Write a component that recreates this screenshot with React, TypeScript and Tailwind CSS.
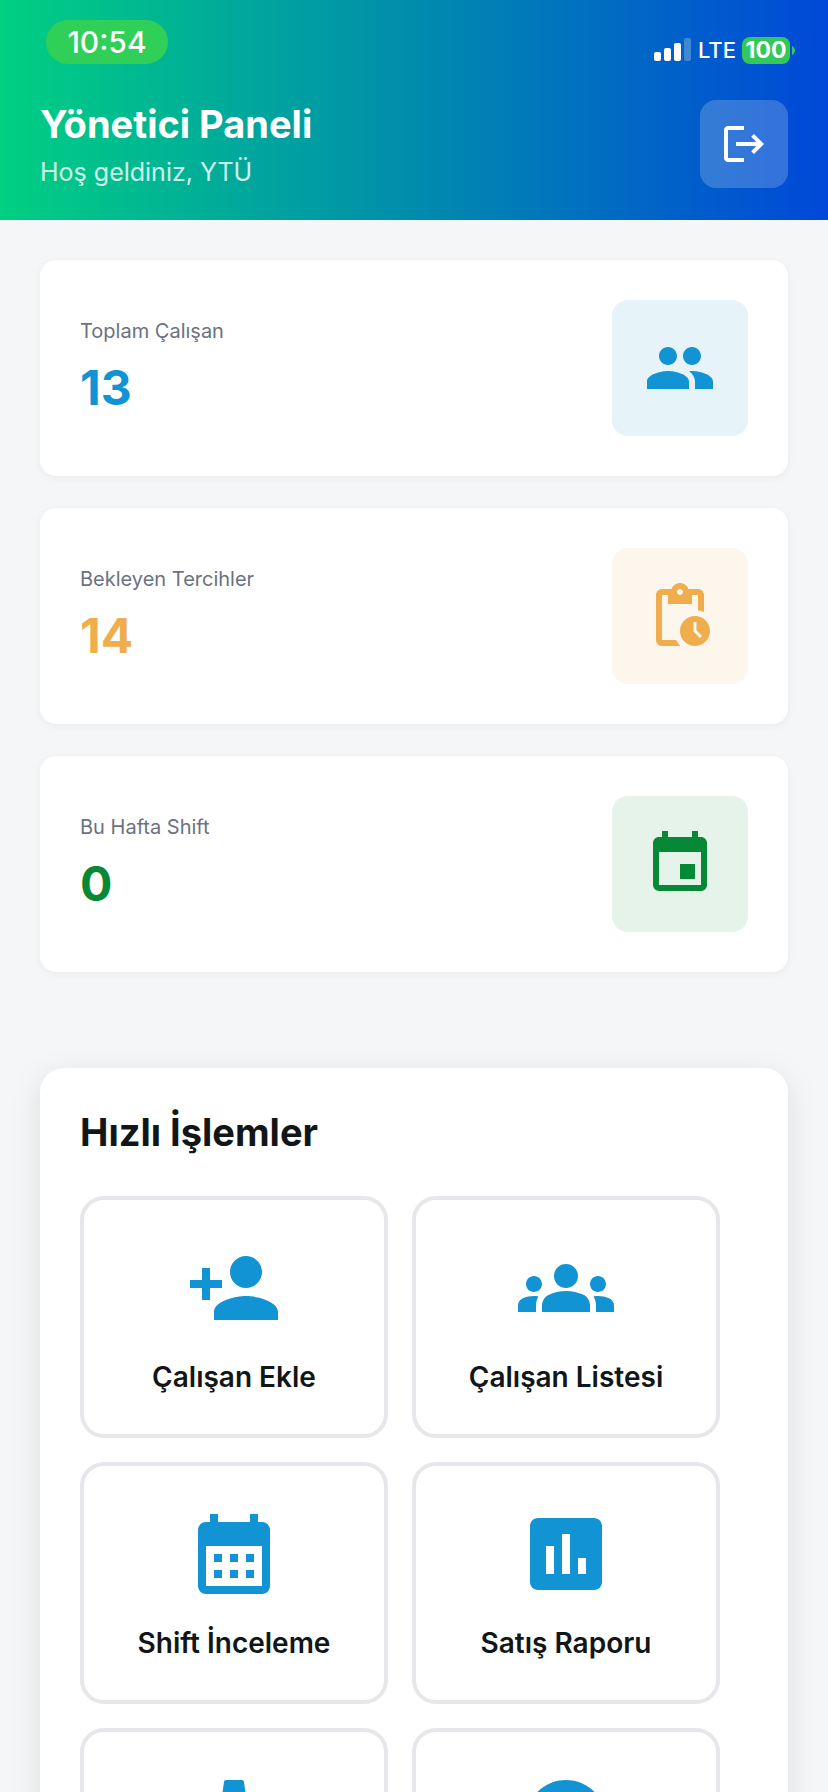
import type { ComponentType, SVGProps } from "react";
import {
  MdAccountCircle,
  MdAssessment,
  MdCalendarMonth,
  MdEvent,
  MdGroups,
  MdLogout,
  MdPendingActions,
  MdPeople,
  MdPersonAdd,
} from "react-icons/md";

type Icon = ComponentType<SVGProps<SVGSVGElement>>;

type Stat = { label: string; value: number; Icon: Icon; text: string; box: string };

function GearIcon(props: SVGProps<SVGSVGElement>) {
  return (
    <svg viewBox="0 0 24 24" fill="currentColor" {...props}>
      <path d="M19.43 12.98c.04-.32.07-.64.07-.98s-.03-.66-.07-.98l2.11-1.65c.19-.15.24-.42.12-.64l-2-3.46c-.12-.22-.39-.3-.61-.22l-2.49 1c-.52-.4-1.08-.73-1.69-.98l-.38-2.65C14.46 2.18 14.25 2 14 2h-4c-.25 0-.46.18-.49.42l-.38 2.65c-.61.25-1.17.59-1.69.98l-2.49-1c-.23-.09-.49 0-.61.22l-2 3.46c-.13.22-.07.49.12.64l2.11 1.65c-.04.32-.07.65-.07.98s.03.66.07.98l-2.11 1.65c-.19.15-.24.42-.12.64l2 3.46c.12.22.39.3.61.22l2.49-1c.52.4 1.08.73 1.69.98l.38 2.65c.03.24.24.42.49.42h4c.25 0 .46-.18.49-.42l.38-2.65c.61-.25 1.17-.59 1.69-.98l2.49 1c.23.09.49 0 .61-.22l2-3.46c.12-.22.07-.49-.12-.64l-2.11-1.65zM12 15.5c-1.93 0-3.5-1.57-3.5-3.5s1.57-3.5 3.5-3.5 3.5 1.57 3.5 3.5-1.57 3.5-3.5 3.5z" />
    </svg>
  );
}

const stats: Stat[] = [
  { label: "Toplam Çalışan", value: 13, Icon: MdPeople, text: "text-[#1193d4]", box: "bg-[#e6f3f9]" },
  { label: "Bekleyen Tercihler", value: 14, Icon: MdPendingActions, text: "text-[#f0ad4e]", box: "bg-[#fdf6ec]" },
  { label: "Bu Hafta Shift", value: 0, Icon: MdEvent, text: "text-[#078836]", box: "bg-[#e5f3ea]" },
];

const actions: { name: string; iconOnly?: boolean; Icon: Icon }[] = [
  { name: "Çalışan Ekle", Icon: MdPersonAdd },
  { name: "Çalışan Listesi", Icon: MdGroups },
  { name: "Shift İnceleme", Icon: MdCalendarMonth },
  { name: "Satış Raporu", Icon: MdAssessment },
  { name: "Ayarlar", iconOnly: true, Icon: GearIcon },
  { name: "Profil", iconOnly: true, Icon: MdAccountCircle },
];

function StatusBar() {
  return (
    <div className="flex items-start justify-between pt-5 pr-[33px] pl-[46px]">
      <div className="flex h-11 w-[122px] items-center justify-center rounded-full bg-[#30cf58] text-[30px] font-medium">
        10:54
      </div>
      <div className="mt-4 flex h-7 items-center">
        <svg className="h-6 w-[38px]" viewBox="0 0 38 24" fill="currentColor" aria-hidden="true">
          <rect x="0" y="14" width="7" height="9" rx="2" />
          <rect x="10" y="10" width="7" height="13" rx="2" />
          <rect x="20" y="5" width="7" height="18" rx="2" />
          <rect x="30" y="0" width="7" height="23" rx="2" opacity="0.25" />
        </svg>
        <span className="ml-[6px] text-[22px] font-medium">LTE</span>
        <span className="ml-[6px] flex h-[27px] w-12 items-center justify-center rounded-lg bg-[#34c759] text-[23px] font-bold">
          100
        </span>
        <svg className="ml-[2px] h-[9px] w-[3px]" viewBox="0 0 3 9" fill="#34c759" aria-hidden="true">
          <path d="M0 0c2 1 3 2.700 3 4.500S2 8 0 9z" />
        </svg>
      </div>
    </div>
  );
}

function StatCard({ label, value, Icon, text, box }: Stat) {
  return (
    <div className="flex items-center justify-between rounded-2xl bg-white p-10 shadow-[0_2px_8px_rgba(0,0,0,0.05)]">
      <div>
        <p className="text-[20px] leading-6 text-[#6b7280]">{label}</p>
        <p className={`mt-4 text-[48px] leading-[58px] font-bold ${text}`}>{value}</p>
      </div>
      <div className={`rounded-2xl p-8 ${box} ${text}`}>
        <Icon className="size-[72px]" aria-hidden="true" />
      </div>
    </div>
  );
}

export default function App() {
  return (
    <div className="h-screen overflow-hidden bg-[#f5f6f8] font-['Inter','Liberation_Sans',sans-serif] text-[#111618]">
      <header className="bg-linear-to-r/srgb from-[#00d082] to-[#0048d9] pb-8 text-white">
        <StatusBar />
        <div className="mt-9 flex items-center justify-between px-10">
          <div>
            <h1 className="text-[38px] leading-[48px] font-bold">Yönetici Paneli</h1>
            <p className="mt-2 text-[25px] leading-8 text-white/80">Hoş geldiniz, YTÜ</p>
          </div>
          <button
            type="button"
            aria-label="Çıkış"
            className="flex size-[88px] items-center justify-center rounded-2xl bg-white/20"
          >
            <MdLogout className="size-12" aria-hidden="true" />
          </button>
        </div>
      </header>

      <main className="px-10 pt-10">
        <section className="flex flex-col gap-8">
          {stats.map((stat) => (
            <StatCard key={stat.label} {...stat} />
          ))}
        </section>

        <section className="mt-24 rounded-3xl bg-white p-10 shadow-[0_8px_32px_rgba(0,0,0,0.1)]">
          <h2 className="text-[38px] leading-[48px] font-bold">Hızlı İşlemler</h2>
          <div className="mt-10 mr-7 grid grid-cols-2 gap-6">
            {actions.map(({ name, iconOnly, Icon }) => (
              <button
                key={name}
                type="button"
                aria-label={name}
                className="flex min-h-[242px] flex-col items-center rounded-3xl border-4 border-[#e5e7eb] bg-white py-10"
              >
                <Icon className="size-24 text-[#1193d4]" aria-hidden="true" />
                {!iconOnly && <span className="mt-6 text-[28px] leading-[34px] font-semibold">{name}</span>}
              </button>
            ))}
          </div>
        </section>
      </main>
    </div>
  );
}
